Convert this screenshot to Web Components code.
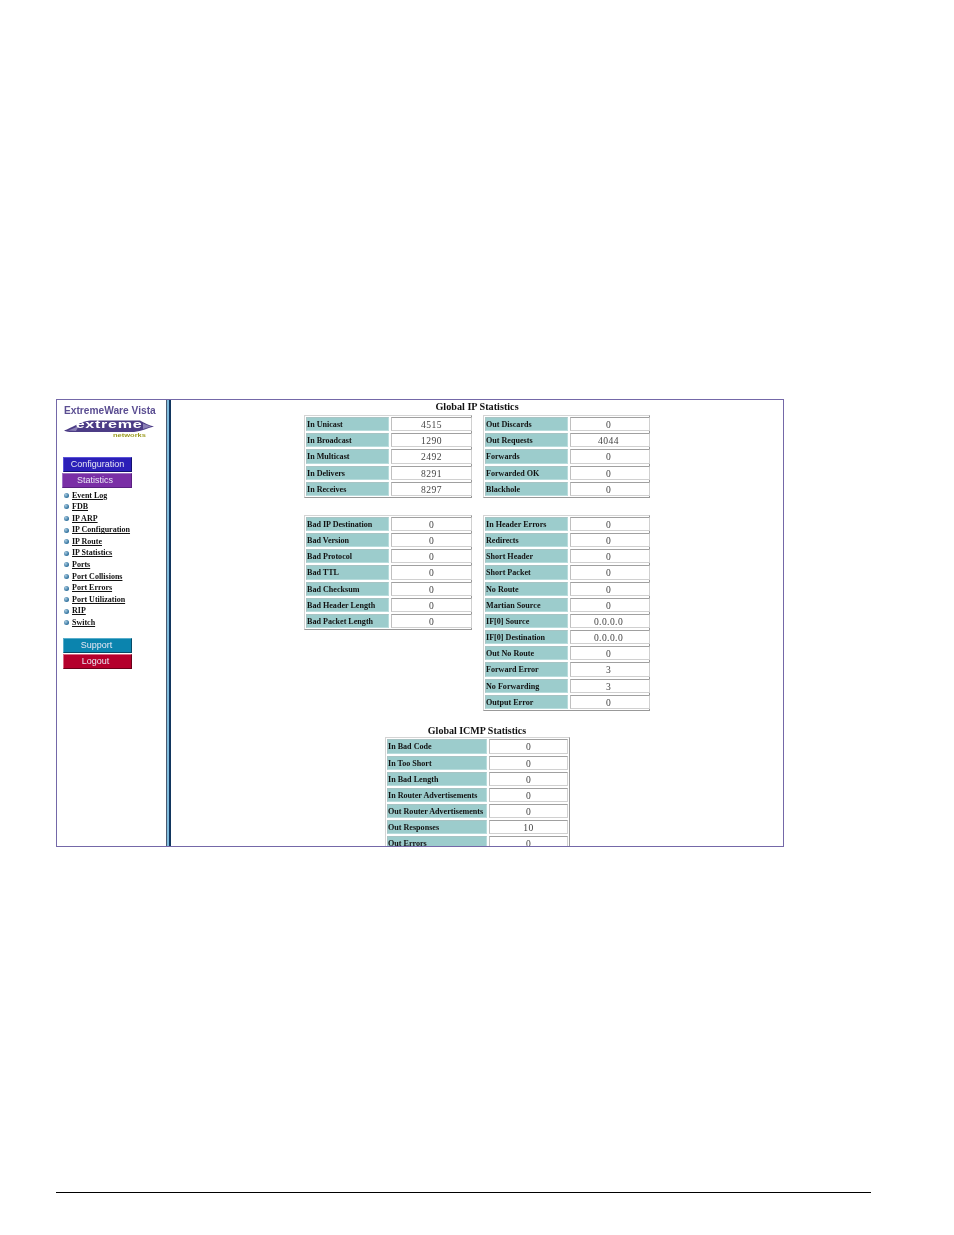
<!DOCTYPE html>
<html lang="en"><head><meta charset="utf-8"><title>ExtremeWare Vista</title>
<style>html,body{margin:0;padding:0;background:#fff}body{width:954px;height:1235px;overflow:hidden;font-family:"Liberation Serif",serif}</style>
</head><body>
<doc-page>
  <vista-frame>
    <vista-sidebar slot="side">
      <nav-button tone="config">Configuration</nav-button>
      <nav-button tone="stats">Statistics</nav-button>
      <nav-link slot="links">Event Log</nav-link><nav-link slot="links">FDB</nav-link><nav-link slot="links">IP ARP</nav-link><nav-link slot="links">IP Configuration</nav-link><nav-link slot="links">IP Route</nav-link><nav-link slot="links">IP Statistics</nav-link><nav-link slot="links">Ports</nav-link><nav-link slot="links">Port Collisions</nav-link><nav-link slot="links">Port Errors</nav-link><nav-link slot="links">Port Utilization</nav-link><nav-link slot="links">RIP</nav-link><nav-link slot="links">Switch</nav-link>
      <nav-button slot="after" tone="support">Support</nav-button>
      <nav-button slot="after" tone="logout">Logout</nav-button>
    </vista-sidebar>
    <stat-section title="Global IP Statistics">
      <div style="display:grid;grid-template-columns:168px 167px;column-gap:11px;row-gap:17px;align-items:start;justify-content:center">
        <stat-table cols="83px 81px" data="In Unicast=4515;In Broadcast=1290;In Multicast=2492;In Delivers=8291;In Receives=8297"></stat-table>
        <stat-table cols="83px 80px" vpad="3" data="Out Discards=0;Out Requests=4044;Forwards=0;Forwarded OK=0;Blackhole=0"></stat-table>
        <stat-table cols="83px 81px" data="Bad IP Destination=0;Bad Version=0;Bad Protocol=0;Bad TTL=0;Bad Checksum=0;Bad Header Length=0;Bad Packet Length=0"></stat-table>
        <stat-table cols="83px 80px" vpad="3" data="In Header Errors=0;Redirects=0;Short Header=0;Short Packet=0;No Route=0;Martian Source=0;IF[0] Source=0.0.0.0;IF[0] Destination=0.0.0.0;Out No Route=0;Forward Error=3;No Forwarding=3;Output Error=0"></stat-table>
      </div>
    </stat-section>
    <stat-section title="Global ICMP Statistics" gap="15.5">
      <div style="display:flex;justify-content:center;padding-left:1px">
        <stat-table cols="100px 79px" data="In Bad Code=0;In Too Short=0;In Bad Length=0;In Router Advertisements=0;Out Router Advertisements=0;Out Responses=10;Out Errors=0"></stat-table>
      </div>
    </stat-section>
  </vista-frame>
</doc-page>
<script>
function def(name, css, html){
  customElements.define(name, class extends HTMLElement{
    connectedCallback(){
      if(this.shadowRoot) return;
      const r=this.attachShadow({mode:"open"});
      r.innerHTML="<style>"+css+"</style>"+html;
    }
  });
}
def("doc-page",
 ":host{display:flex;flex-direction:column;width:954px;height:1235px;box-sizing:border-box;padding:399px 0 0 56px}"+
 ".rule{margin-top:345px;width:815px;height:1px;background:#000}",
 "<slot></slot><div class='rule'></div>");
def("vista-frame",
 ":host{display:flex;width:728px;height:448px;box-sizing:border-box;border:1px solid #7468a8;overflow:hidden;background:#fff;filter:blur(.3px)}"+
 ".side{flex:none;width:109px}.bar{flex:none;width:5px;background:linear-gradient(90deg,#4a5a70 0 .6px,#7fbbdc .6px 3.2px,#12365e 3.2px 4.6px,#fff 4.6px)}"+
 ".main{flex:1;min-width:0;display:flex;flex-direction:column}",
 "<div class='side'><slot name='side'></slot></div><div class='bar'></div><div class='main'><slot></slot></div>");
def("vista-sidebar",
 ":host{display:block;height:100%;box-sizing:border-box;padding:5px 0 0 6px;background:#fff}"+
 ".brand{font:bold 10.2px 'Liberation Sans',sans-serif;color:#5b4e92;margin-left:1px;line-height:11px;white-space:nowrap}"+
 ".logo{position:relative;display:block;width:90px;height:20px;margin:2px 0 0 1px}"+
 "svg{position:absolute;left:0;top:0}"+
 ".ex{position:absolute;left:12px;top:.3px;width:66px;text-align:center;font:bold 11.5px/12px 'Liberation Sans',sans-serif;color:#fff;letter-spacing:.5px;white-space:nowrap;transform:scaleX(1.4)}"+
 ".nw{position:absolute;left:49px;top:13.5px;font:bold 6px/6px 'Liberation Sans',sans-serif;color:#9a9a1e;white-space:nowrap;transform:scaleX(1.25);transform-origin:left center}"+
 ".btns{display:flex;flex-direction:column;gap:1px;margin-top:19px}"+
 ".links{display:flex;flex-direction:column;margin:1.5px 0 0 1px}"+
 ".after{display:flex;flex-direction:column;gap:1px;margin-top:9.5px}",
 "<div class='brand'>ExtremeWare Vista</div><div class='logo'><svg width='90' height='20' viewBox='0 0 90 20'><path d='M0 12.5C8 10 14 4 26 2.5L76 2.5C80 5 85 7.5 90 8.5C84 10 78 13 70 14L8 14C5 14 2 13.5 0 12.5Z' fill='#4c3c86'/><path d='M4 12.5C9 11 12 9 15 7.5L12 13Z' fill='#8b80b6'/><path d='M79 5.5L87 8.5L79 11Z' fill='#8b80b6'/></svg><span class='ex'>extreme</span><span class='nw'>networks</span></div>"+
 "<div class='btns'><slot></slot></div><div class='links'><slot name='links'></slot></div><div class='after'><slot name='after'></slot></div>");
const tones={
 config:["#2b1fb8","#5a52d8","#14106e",0],
 stats:["#7a2fa6","#a070c4","#5a2080",4],
 support:["#0b84ae","#58aecb","#064a66",2],
 logout:["#b5002c","#d86a84","#6a0018",4]};
customElements.define("nav-button",class extends HTMLElement{
  connectedCallback(){
    if(this.shadowRoot)return;
    const tone=this.getAttribute("tone"),t=tones[tone];
    const off=tone==="stats"?-1:0;
    const r=this.attachShadow({mode:"open"});
    r.innerHTML="<style>:host{display:block;width:"+(off?70:69)+"px;height:15px;margin-left:"+off+"px;padding-right:"+t[3]+"px;box-sizing:border-box;background:"+t[0]+";border:1.5px solid;border-color:"+t[1]+" "+t[2]+" "+t[2]+" "+t[1]+";color:#e8e8f4;font:9px/12px 'Liberation Sans',sans-serif;text-align:center;white-space:nowrap}</style><slot></slot>";
  }
});
def("nav-link",
 ":host{display:flex;align-items:center;height:11.6px;gap:3px;font:bold 8px/11.6px 'Liberation Serif',serif;color:#111;white-space:nowrap}"+
 ".dot{flex:none;width:5px;height:5px;border-radius:50%;background:radial-gradient(circle at 35% 35%,#a9cbe0,#2d6f9c 70%)}"+
 "a{text-decoration:underline;color:inherit}",
 "<span class='dot'></span><a><slot></slot></a>");
customElements.define("stat-section",class extends HTMLElement{
  connectedCallback(){
    if(this.shadowRoot)return;
    const r=this.attachShadow({mode:"open"});
    const g=this.getAttribute("gap");
    r.innerHTML="<style>:host{display:block;flex:none;padding-top:"+(g?g:2)+"px}.t{font:bold "+(g?"10px":"10.2px")+"/10px 'Liberation Serif',serif;text-align:center;color:#111;margin-bottom:"+(g?1:3)+"px}</style><div class='t'></div><slot></slot>";
    r.querySelector(".t").textContent=this.getAttribute("title");
  }
});
customElements.define("stat-table",class extends HTMLElement{
  connectedCallback(){
    if(this.shadowRoot)return;
    const r=this.attachShadow({mode:"open"});
    const cells=this.getAttribute("data").split(";").map(p=>{const [l,v]=p.split("=");return "<div class='l'>"+l+"</div><div class='v'>"+v+"</div>"}).join("");
    r.innerHTML="<style>:host{display:inline-block;box-sizing:border-box;border:1px solid;border-color:#d4d4d4 #999 #999 #d4d4d4;padding:1px}"+
    ".g{display:grid;grid-template-columns:"+this.getAttribute("cols")+";gap:2px;grid-auto-rows:14.18px}"+
    ".l,.v{box-sizing:border-box;white-space:nowrap;overflow:hidden}"+
    ".l{background:#9ccccc;font:bold 8.1px/13.2px 'Liberation Serif',serif;color:#111;padding-left:0;border:1px solid;border-color:#a8c4c4 #b8dcdc #b8dcdc #a8c4c4}"+
    ".v{background:#fff;font:9.6px/13.2px 'Liberation Serif',serif;color:#444;text-align:center;letter-spacing:.4px;padding-right:"+(this.getAttribute("vpad")||0)+"px;border:1px solid;border-color:#a0a0a0 #d0d0d0 #d0d0d0 #c0c0c0}"+
    "</style><div class='g'>"+cells+"</div>";
  }
});
</script>
</body></html>
